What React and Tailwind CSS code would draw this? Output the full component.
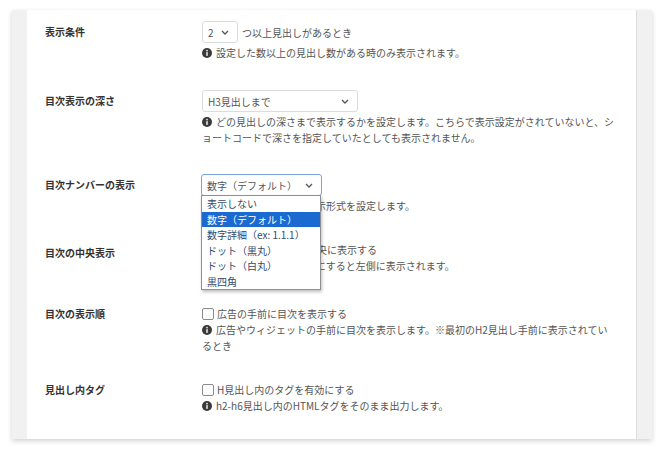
import React from 'react';

const Info = () => (
    <svg width="10" height="10" viewBox="0 0 16 16" className="inline-block mr-[4px] align-[-1px]">
        <circle cx="8" cy="8" r="8" fill="#3a3a3a" />
        <rect x="6.9" y="6.6" width="2.2" height="6" fill="#fff" />
        <circle cx="8" cy="4.2" r="1.3" fill="#fff" />
    </svg>
);

const Chevron = () => (
    <svg width="8" height="5" viewBox="0 0 8 5" className="shrink-0">
        <path d="M1 1l3 3 3-3" fill="none" stroke="#555" strokeWidth="1.3" />
    </svg>
);

const Select = ({ value, width, focused }) => (
    <div
        className={
            'flex items-center justify-between h-[22px] pl-[5px] pr-[8px] rounded-[3px] bg-white text-[#555] ' +
            (focused ? 'border border-[#7aa5dc]' : 'border border-[#dcdcdc]')
        }
        style={{ width }}
    >
        <span>{value}</span>
        <Chevron />
    </div>
);

const Checkbox = () => (
    <span className="inline-block w-[12px] h-[12px] border border-[#8a8a8a] rounded-[2px] bg-white mr-[3px] align-[-2px]" />
);

const Note = ({ children }) => (
    <p className="text-[#555] leading-[16px] whitespace-nowrap">
        <Info />
        {children}
    </p>
);

const Row = ({ label, labelLh, className, children }) => (
    <div className={'flex ' + className}>
        <div className={'w-[175px] pl-[18px] font-bold text-[#333] ' + labelLh}>{label}</div>
        <div className="flex-1 pr-[16px]">{children}</div>
    </div>
);

const App = () => {
    return (
        <div
            className="w-[664px] h-[451px] bg-white pt-[10px] pl-[12px] text-[10px]"
            style={{ fontFamily: '"Noto Sans CJK JP", "Noto Sans", sans-serif' }}
        >
            <div className="w-[640px] h-[429px] bg-[#f1f1f1] px-[15px] shadow-[0_2px_5px_rgba(0,0,0,0.18)]">
                <div className="h-full bg-white border-r border-[#dedede] pt-[11px]">
                    {/* 表示条件 */}
                    <Row label="表示条件" labelLh="leading-[22px]" className="">
                        <div className="flex items-center gap-[4px]">
                            <Select value="2" width={36} />
                            <span className="text-[#555]">つ以上見出しがあるとき</span>
                        </div>
                        <div className="mt-[2px]">
                            <Note>設定した数以上の見出し数がある時のみ表示されます。</Note>
                        </div>
                    </Row>

                    {/* 目次表示の深さ */}
                    <Row label="目次表示の深さ" labelLh="leading-[22px]" className="mt-[29px]">
                        <Select value="H3見出しまで" width={156} />
                        <div className="mt-[2px]">
                            <Note>
                                どの見出しの深さまで表示するかを設定します。こちらで表示設定がされていないと、シ
                                <br />
                                ョートコードで深さを指定していたとしても表示されません。
                            </Note>
                        </div>
                    </Row>

                    {/* 目次ナンバーの表示 */}
                    <Row label="目次ナンバーの表示" labelLh="leading-[22px]" className="mt-[28px]">
                        <div className="relative w-[121px] -ml-[1px]">
                            <Select value="数字（デフォルト）" width={121} focused />
                            <ul className="absolute left-0 top-[21px] w-[120px] bg-white border border-[#8f8f8f] shadow-[1px_2px_3px_rgba(0,0,0,0.25)] text-[#34496a] z-10">
                                {['表示しない', '数字（デフォルト）', '数字詳細（ex: 1.1.1）', 'ドット（黒丸）', 'ドット（白丸）', '黒四角'].map(
                                    (item, index) => (
                                        <li
                                            key={index}
                                            className={
                                                'h-[15.5px] leading-[15.5px] pl-[5px] whitespace-nowrap ' +
                                                (index === 1 ? 'bg-[#1a6ad2] text-white' : '')
                                            }
                                        >
                                            {item}
                                        </li>
                                    )
                                )}
                            </ul>
                        </div>
                        <div className="mt-[2px]">
                            <Note>目次の見出し番号の表示形式を設定します。</Note>
                        </div>
                    </Row>

                    {/* 目次の中央表示 */}
                    <Row label="目次の中央表示" labelLh="leading-[16px] pt-[3px]" className="mt-[28px]">
                        <p className="text-[#555] leading-[16px]">
                            <Checkbox />
                            目次をコンテンツの中央に表示する
                        </p>
                        <Note>チェックを外して無効にすると左側に表示されます。</Note>
                    </Row>

                    {/* 目次の表示順 */}
                    <Row label="目次の表示順" labelLh="leading-[16px]" className="mt-[32px]">
                        <p className="text-[#555] leading-[16px]">
                            <Checkbox />
                            広告の手前に目次を表示する
                        </p>
                        <Note>
                            広告やウィジェットの手前に目次を表示します。※最初のH2見出し手前に表示されてい
                            <br />
                            るとき
                        </Note>
                    </Row>

                    {/* 見出し内タグ */}
                    <Row label="見出し内タグ" labelLh="leading-[16px]" className="mt-[28px]">
                        <p className="text-[#555] leading-[16px]">
                            <Checkbox />
                            H見出し内のタグを有効にする
                        </p>
                        <Note>h2-h6見出し内のHTMLタグをそのまま出力します。</Note>
                    </Row>
                </div>
            </div>
        </div>
    );
};

export default App;
